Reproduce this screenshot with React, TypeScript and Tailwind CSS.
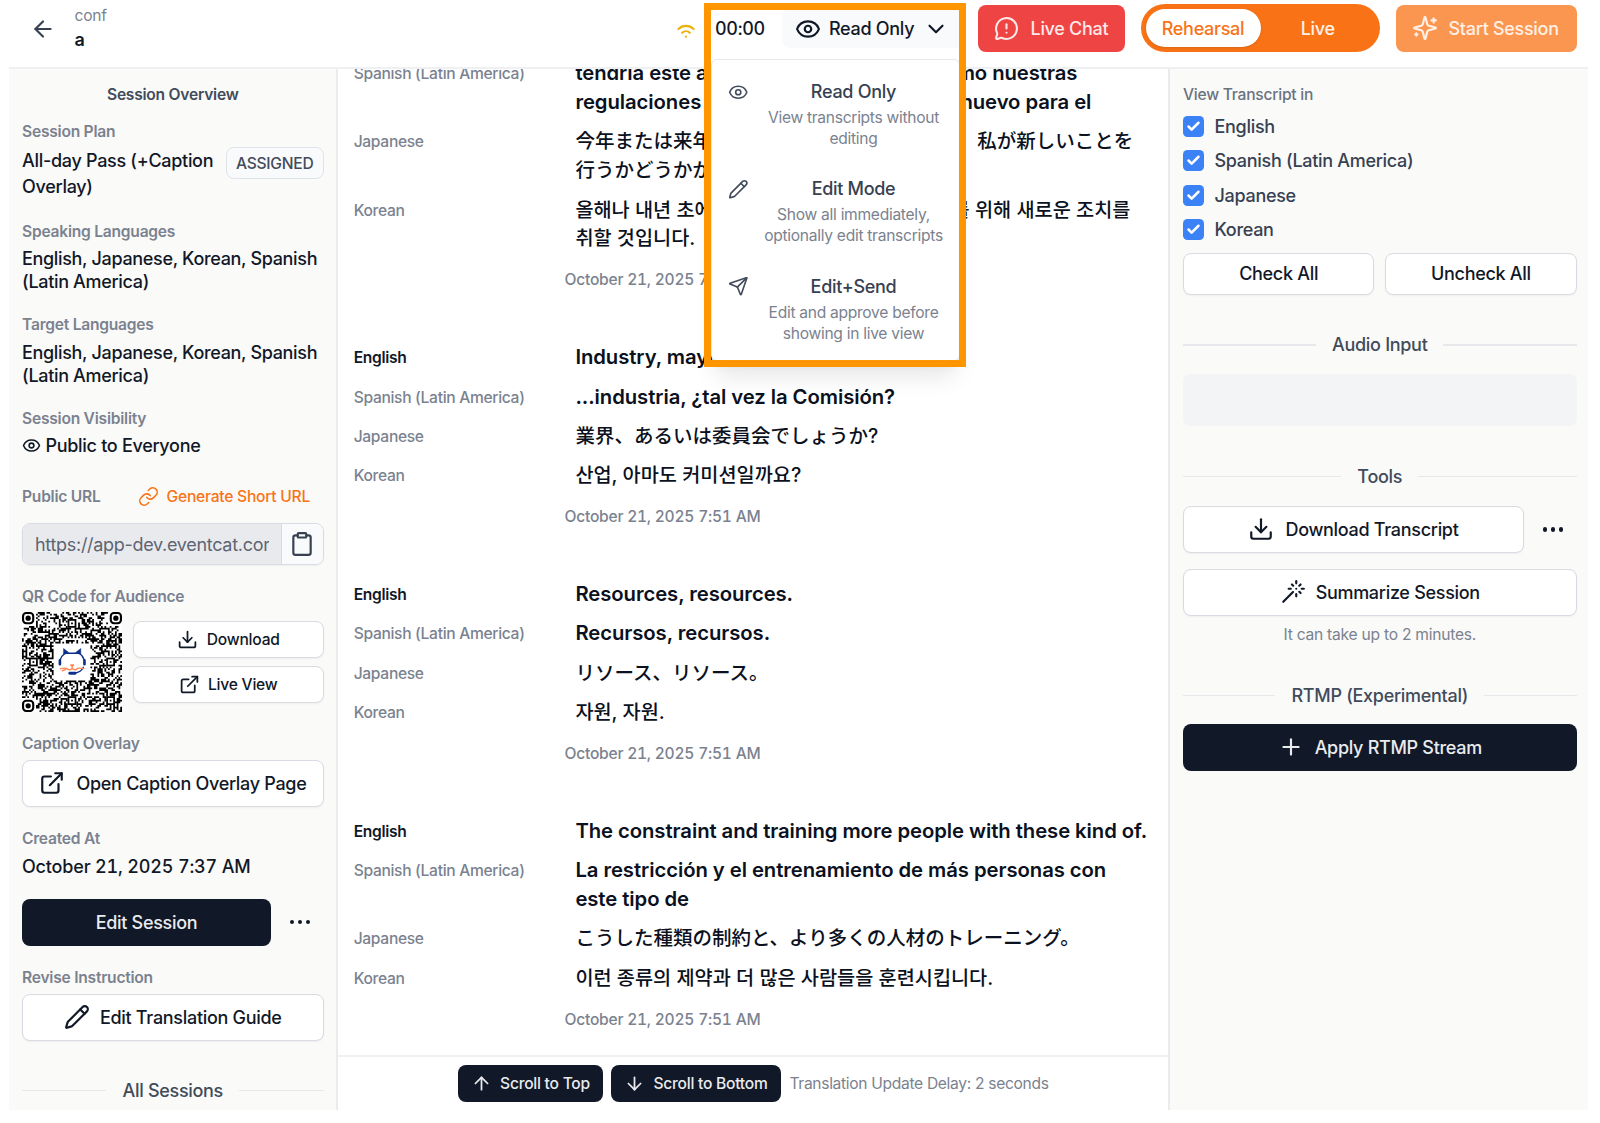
import type { ReactNode } from 'react';
import clsx from 'clsx';
import {
  ArrowDown,
  ArrowLeft,
  ArrowUp,
  Check,
  ChevronDown,
  Clipboard,
  Download,
  ExternalLink,
  Eye,
  Link,
  MessageCircleWarning,
  Pencil,
  Plus,
  Send,
  Wand,
  WifiHigh,
} from 'lucide-react';

/* ── Shared text styles ── */
const textBase = 'text-[18px] tracking-[-0.3px]';
const textSmall = 'text-[15.6px] tracking-[-0.24px]';

/* ── Transcript data ── */
type Line = { lang: string; rows: ReactNode[]; kind?: 'ja' | 'ko' };
type Entry = { id: number; lines: Line[]; time: string };

const Split = ({ className, left, right }: { className: string; left: string; right: string }) => (
  <span className={clsx('flex justify-between', className)}>
    <span>{left}</span>
    <span>{right}</span>
  </span>
);

const TIME = 'October 21, 2025 7:51 AM';

const entries: Entry[] = [
  {
    id: 1,
    time: TIME,
    lines: [
      {
        lang: 'Spanish (Latin America)',
        rows: [
          <Split key="a" className="w-[502px]" left="tendría este año" right="como nuestras" />,
          <Split key="b" className="w-[516px]" left="regulaciones" right="nuevo para el" />,
        ],
      },
      {
        lang: 'Japanese',
        kind: 'ja',
        rows: [
          <Split key="a" className="w-[558px]" left="今年または来年" right="私が新しいことを" />,
          '行うかどうかが',
        ],
      },
      {
        lang: 'Korean',
        kind: 'ko',
        rows: [
          <Split key="a" className="w-[555px]" left="올해나 내년 초에" right="를 위해 새로운 조치를" />,
          '취할 것입니다.',
        ],
      },
    ],
  },
  {
    id: 2,
    time: TIME,
    lines: [
      { lang: 'English', rows: ['Industry, maybe'] },
      { lang: 'Spanish (Latin America)', rows: ['...industria, ¿tal vez la Comisión?'] },
      { lang: 'Japanese', kind: 'ja', rows: ['業界、あるいは委員会でしょうか?'] },
      { lang: 'Korean', kind: 'ko', rows: ['산업, 아마도 커미션일까요?'] },
    ],
  },
  {
    id: 3,
    time: TIME,
    lines: [
      { lang: 'English', rows: ['Resources, resources.'] },
      { lang: 'Spanish (Latin America)', rows: ['Recursos, recursos.'] },
      { lang: 'Japanese', kind: 'ja', rows: ['リソース、リソース。'] },
      { lang: 'Korean', kind: 'ko', rows: ['자원, 자원.'] },
    ],
  },
  {
    id: 4,
    time: TIME,
    lines: [
      { lang: 'English', rows: ['The constraint and training more people with these kind of.'] },
      {
        lang: 'Spanish (Latin America)',
        rows: ['La restricción y el entrenamiento de más personas con', 'este tipo de'],
      },
      { lang: 'Japanese', kind: 'ja', rows: ['こうした種類の制約と、より多くの人材のトレーニング。'] },
      { lang: 'Korean', kind: 'ko', rows: ['이런 종류의 제약과 더 많은 사람들을 훈련시킵니다.'] },
    ],
  },
];

const modes = [
  { Icon: Eye, title: 'Read Only', lines: ['View transcripts without', 'editing'] },
  { Icon: Pencil, title: 'Edit Mode', lines: ['Show all immediately,', 'optionally edit transcripts'] },
  { Icon: Send, title: 'Edit+Send', lines: ['Edit and approve before', 'showing in live view'] },
];

const languages = ['English', 'Spanish (Latin America)', 'Japanese', 'Korean'];

/* ── QR code ── */
const QR_SIZE = 57;
const ALIGN = [
  [28, 6],
  [6, 28],
  [50, 28],
  [28, 50],
  [50, 50],
];
const FINDERS = [
  [0, 0],
  [50, 0],
  [0, 50],
];

const buildQrPath = () => {
  let seed = 20251021;
  let d = '';
  for (let y = 0; y < QR_SIZE; y++) {
    for (let x = 0; x < QR_SIZE; x++) {
      seed = (seed * 1103515245 + 12345) % 2147483648;
      const inFinder = FINDERS.some(([fx, fy]) => x >= fx - 1 && x <= fx + 7 && y >= fy - 1 && y <= fy + 7);
      const inAlign = ALIGN.some(([ax, ay]) => Math.abs(x - ax) < 3 && Math.abs(y - ay) < 3);
      const inLogo = x > 17 && x < 39 && y > 17 && y < 39;
      if (inFinder || inAlign || inLogo) continue;
      if ((seed >> 12) % 100 < 50) d += `M${x} ${y}h1v1h-1z`;
    }
  }
  return d;
};

const qrPath = buildQrPath();

const QrCode = () => (
  <svg viewBox="0 0 57 57" className="size-[100px] shrink-0 bg-white">
    <path d={qrPath} fill="#000" />
    {FINDERS.map(([x, y]) => (
      <g key={`${x}-${y}`}>
        <rect x={x + 0.6} y={y + 0.6} width="5.8" height="5.8" rx="1.8" fill="none" stroke="#000" strokeWidth="1.2" />
        <circle cx={x + 3.5} cy={y + 3.5} r="1.5" />
      </g>
    ))}
    {ALIGN.map(([x, y]) => (
      <g key={`${x}-${y}`}>
        <rect x={x - 1.5} y={y - 1.5} width="4" height="4" fill="none" stroke="#000" />
        <rect x={x} y={y} width="1" height="1" />
      </g>
    ))}
    {/* Cat logo with headset */}
    <g fill="none" strokeLinecap="round" strokeLinejoin="round">
      <path d="M21.8 27.2c.5-1.600 1.500-2.800 2.700-3.700h8.200c1.300.9 2.200 2.100 2.700 3.700" stroke="#0b2f8a" strokeWidth=".8" />
      <path d="M23.700 24v-3.200l2.900 2.300zM33.500 24v-3.200l-2.900 2.300z" fill="#0b2f8a" stroke="#0b2f8a" strokeWidth=".3" />
      <path d="M21.600 27.600v2.200M35.600 27.600v2.200" stroke="#0b2f8a" strokeWidth="1.500" />
      <path d="M35 31.500c-.8 1.700-2.300 2.800-4.400 3.200" stroke="#0b2f8a" strokeWidth=".7" />
      <path d="M27.300 34.900h2.900" stroke="#0b2f8a" strokeWidth="1.700" />
      <path
        d="M27.800 30.200h1.600l-.8.8zM28.600 31.200v1c-1.200 1.100-2.400.8-3-.1-1.100-.3-2.200-.1-3.600.2M28.600 32.200c1.200 1.100 2.400.8 3-.1 1.100-.3 2.200-.1 3.600.2M25 32.700l-2 .8"
        stroke="#ff8552"
        strokeWidth=".8"
      />
    </g>
  </svg>
);

const Sparkles = () => (
  <svg
    viewBox="0 0 24 24"
    className="size-[26px]"
    fill="none"
    stroke="currentColor"
    strokeWidth="2"
    strokeLinecap="round"
    strokeLinejoin="round"
  >
    <path d="M9.937 15.5A2 2 0 0 0 8.5 14.063l-6.135-1.582a.5.5 0 0 1 0-.962L8.5 9.936A2 2 0 0 0 9.937 8.5l1.582-6.135a.5.5 0 0 1 .963 0L14.063 8.5A2 2 0 0 0 15.5 9.937l6.135 1.581a.5.5 0 0 1 0 .964L15.5 14.063a2 2 0 0 0-1.437 1.437l-1.582 6.135a.5.5 0 0 1-.963 0z" />
    <path d="M20 3v4M22 5h-4M4 17v2M5 18H3" />
  </svg>
);

const Dots = () => (
  <span className="flex items-center gap-[3.800px]">
    <i className="size-[4.200px] rounded-full bg-[#111827]" />
    <i className="size-[4.200px] rounded-full bg-[#111827]" />
    <i className="size-[4.200px] rounded-full bg-[#111827]" />
  </span>
);

/* ── Building blocks ── */
const Label = ({ className, children }: { className?: string; children: ReactNode }) => (
  <div className={clsx('h-6 leading-6 font-semibold text-[#7b828f]', textSmall, className)}>{children}</div>
);

const Divider = ({ className, children }: { className?: string; children: ReactNode }) => (
  <div className={clsx('flex h-6 items-center gap-4 font-medium text-[#414b5a]', textBase, className)}>
    <span className="h-[1.500px] flex-1 bg-[#e6e8ec]" />
    {children}
    <span className="h-[1.500px] flex-1 bg-[#e6e8ec]" />
  </div>
);

const Button = ({
  className,
  dark,
  small,
  children,
}: {
  className?: string;
  dark?: boolean;
  small?: boolean;
  children: ReactNode;
}) => (
  <button
    className={clsx(
      'flex items-center justify-center rounded-[8px] font-medium whitespace-nowrap',
      small ? textSmall : textBase,
      dark ? 'bg-[#111827] text-[#e9ebee]' : 'border-[1.500px] border-[#d8dbe2] bg-white text-[#111827] shadow-xs',
      className,
    )}
  >
    {children}
  </button>
);

const Header = () => (
  <header className="flex h-[69px] shrink-0 border-b-2 border-[#eef0f2] pl-[21px]">
    <div className="flex h-[57px] items-center">
      <ArrowLeft size={26} className="text-[#374151]" />
    </div>
    <div className="ml-[18.500px] pt-[3.500px]">
      <div className={clsx('h-6 leading-6 text-[#7b828f]', textSmall)}>conf</div>
      <div className={clsx('h-6 leading-6 font-semibold text-[#111827]', textBase)}>a</div>
    </div>
    <div className="ml-auto flex h-14 items-center pr-[11.500px]">
      <WifiHigh size={26} className="text-[#eab308]" />
      <span className={clsx('ml-[16px] w-[66.500px] font-medium text-[#111827] tabular-nums', textBase)}>00:00</span>
      <div
        className={clsx(
          'flex h-[39px] w-[184px] items-center rounded-[8px] bg-[#f9fafb] pt-px pl-[13px] font-medium text-[#111827]',
          textBase,
        )}
      >
        <Eye size={26} />
        <span className="ml-[8.500px]">Read Only</span>
        <ChevronDown size={26} className="ml-[8.500px]" />
      </div>
      <button
        className={clsx(
          'ml-[12px] flex h-[47px] w-[147px] items-center rounded-[8px] bg-[#ef4444] pl-[16px] font-medium text-[#fde8e8]',
          textBase,
        )}
      >
        <MessageCircleWarning size={25} />
        <span className="ml-[12px]">Live Chat</span>
      </button>
      <div
        className={clsx(
          'ml-[16px] flex h-[48px] w-[239.500px] items-center rounded-full bg-[#f97316] p-[5px] font-medium',
          textBase,
        )}
      >
        <span className="flex h-full w-[115px] items-center justify-center rounded-full bg-white text-[#f97316] shadow">
          Rehearsal
        </span>
        <span className="flex-1 text-center text-[#fff1e6]">Live</span>
      </div>
      <button
        className={clsx(
          'ml-[15.500px] flex h-[47px] w-[181px] items-center rounded-[8px] bg-[#fb9650] pl-[16px] font-medium text-[#fff0e5]',
          textBase,
        )}
      >
        <Sparkles />
        <span className="ml-[11px]">Start Session</span>
      </button>
    </div>
  </header>
);

const Sidebar = () => (
  <aside className="flex w-[329px] shrink-0 flex-col overflow-hidden border-r-2 border-[#e9ebef] bg-[#fafaf9] pr-[12.500px] pl-[13px] text-[#111827]">
    <div className={clsx('mt-[14px] h-6 text-center leading-6 font-semibold text-[#414b5a]', textSmall)}>
      Session Overview
    </div>
    <Label className="mt-[13px]">Session Plan</Label>
    <div className="mt-[4px] flex justify-between">
      <div className={clsx('h-[52px] w-[200px] leading-[26px] font-medium', textBase)}>
        All-day Pass (+Caption Overlay)
      </div>
      <div
        className={clsx(
          '-mt-[0.700px] flex h-[32px] w-[97.500px] shrink-0 items-center justify-center rounded-[8px] border-[1.500px] border-[#dfe2e8] bg-[#f9fafb] font-medium text-[#414b5a]',
          textSmall,
        )}
      >
        ASSIGNED
      </div>
    </div>
    <Label className="mt-[19.500px]">Speaking Languages</Label>
    <div className="mt-[3.500px] text-[18px] leading-[23px] font-medium tracking-[-0.33px]">
      English, Japanese, Korean, Spanish
      <br />
      (Latin America)
    </div>
    <Label className="mt-[19.500px]">Target Languages</Label>
    <div className="mt-1 text-[18px] leading-[23px] font-medium tracking-[-0.33px]">
      English, Japanese, Korean, Spanish
      <br />
      (Latin America)
    </div>
    <Label className="mt-[20px]">Session Visibility</Label>
    <div className={clsx('mt-[3.500px] flex h-[23px] items-center gap-[4.500px] font-medium', textBase)}>
      <Eye size={19} />
      Public to Everyone
    </div>
    <div className="mt-[27.500px] flex items-center">
      <Label>Public URL</Label>
      <div className={clsx('ml-auto flex items-center gap-[8px] pr-[13.500px] font-medium text-[#f97316]', textSmall)}>
        <Link size={21} strokeWidth={1.8} />
        Generate Short URL
      </div>
    </div>
    <div className="mt-[14.500px] flex h-[42px] shrink-0 overflow-hidden rounded-[8px] border-[1.500px] border-[#d8dbe2] shadow-xs">
      <div className={clsx('flex flex-1 items-center bg-[#e9eaed] px-[12px] text-[#5d6572]', textBase)}>
        <span className="w-[234px] overflow-hidden whitespace-nowrap">https://app-dev.eventcat.com</span>
      </div>
      <div className="flex w-[42px] items-center justify-center border-l-[1.500px] border-[#d8dbe2] bg-[#f9fafb]">
        <Clipboard size={26} className="text-[#374151]" />
      </div>
    </div>
    <Label className="mt-[19.500px]">QR Code for Audience</Label>
    <div className="mt-[3.500px] flex items-center gap-[11px]">
      <QrCode />
      <div className="flex flex-1 flex-col gap-[8px]">
        <Button small className="h-[37px] gap-[9px]">
          <Download size={21} />
          Download
        </Button>
        <Button small className="h-[37px] gap-[8px]">
          <ExternalLink size={21} />
          Live View
        </Button>
      </div>
    </div>
    <Label className="mt-[20px]">Caption Overlay</Label>
    <Button className="mt-[3.500px] h-[47px] gap-[11.500px]">
      <ExternalLink size={26} />
      Open Caption Overlay Page
    </Button>
    <Label className="mt-[20px]">Created At</Label>
    <div className="mt-1 h-[23px] text-[18px] leading-[23px] font-medium tracking-[-0.18px] tabular-nums">
      October 21, 2025 7:37 AM
    </div>
    <div className="mt-[21px] flex items-center">
      <Button dark className="h-[47px] w-[249px]">
        Edit Session
      </Button>
      <span className="flex flex-1 justify-center pl-[5px]">
        <Dots />
      </span>
    </div>
    <Label className="mt-[20px]">Revise Instruction</Label>
    <Button className="mt-[4px] h-[47px] gap-[10px]">
      <Pencil size={26} />
      Edit Translation Guide
    </Button>
    <Divider className="mt-[38px]">All Sessions</Divider>
  </aside>
);

const Transcript = () => (
  <main className="flex min-w-0 flex-1 flex-col">
    <div className="min-h-0 flex-1 overflow-hidden">
      <div className="-mt-[15px]">
        {entries.map((entry) => (
          <div key={entry.id} className="pb-[46.400px]">
            {entry.lines.map((line) => (
              <div key={line.lang} className="flex py-[5.300px] pl-[15.700px]">
                <div
                  className={clsx(
                    'h-[28.800px] w-[221.700px] shrink-0 text-[15.600px] leading-[30.800px] tracking-[-0.32px]',
                    line.lang === 'English' ? 'font-semibold text-[#111827]' : 'font-medium text-[#7b828f]',
                  )}
                >
                  {line.lang}
                </div>
                <div
                  className={clsx(
                    'whitespace-nowrap text-[#0b1120]',
                    !line.kind && 'text-[20.300px] font-semibold tracking-[-0.07px]',
                    line.kind === 'ja' && "font-['Inter','Noto_Sans_CJK_JP',sans-serif] text-[19.500px] font-medium",
                    line.kind === 'ko' && "font-['Inter','Noto_Sans_CJK_KR',sans-serif] text-[19.700px] font-medium",
                  )}
                >
                  {line.rows.map((row, i) => (
                    <div key={i} className="h-[28.800px] leading-[28.800px]">
                      {row}
                    </div>
                  ))}
                </div>
              </div>
            ))}
            <div
              className={clsx(
                'mt-[8.900px] h-6 pl-[226.500px] leading-[25px] font-medium text-[#7b828f] tabular-nums',
                textSmall,
              )}
            >
              {entry.time}
            </div>
          </div>
        ))}
      </div>
    </div>
    <footer className="flex h-[55px] shrink-0 items-center border-t-2 border-[#eef0f2] pl-[120px]">
      <Button dark small className="h-[37px] w-[145px] gap-[8px]">
        <ArrowUp size={21} />
        Scroll to Top
      </Button>
      <Button dark small className="ml-[8px] h-[37px] w-[170px] gap-[8px]">
        <ArrowDown size={21} />
        Scroll to Bottom
      </Button>
      <span className="ml-[8.500px] text-[15.600px] tracking-[-0.32px] text-[#7b828f]">
        Translation Update Delay: 2 seconds
      </span>
    </footer>
  </main>
);

const ToolsPanel = () => (
  <aside className="flex w-[420px] shrink-0 flex-col border-l-2 border-[#e9ebef] bg-[#fafaf9] pr-[11.500px] pl-[13px]">
    <div className={clsx('mt-[14px] h-6 leading-6 font-medium text-[#6b7280]', textSmall)}>View Transcript in</div>
    <div className="mt-[2.700px]">
      {languages.map((lang) => (
        <div key={lang} className={clsx('flex h-[34.200px] items-center font-medium text-[#374151]', textBase)}>
          <span className="mr-[10.500px] flex size-[21px] items-center justify-center rounded-[4.500px] bg-[#3b82f6]">
            <Check size={15} strokeWidth={4} className="text-white" />
          </span>
          {lang}
        </div>
      ))}
    </div>
    <div className="mt-[6.500px] grid grid-cols-2 gap-[11px]">
      <Button className="h-[42px]">Check All</Button>
      <Button className="h-[42px]">Uncheck All</Button>
    </div>
    <Divider className="mt-[38px]">Audio Input</Divider>
    <div className="mt-[17px] h-[52px] rounded-[7px] bg-[#f3f4f6]" />
    <Divider className="mt-[38.500px]">Tools</Divider>
    <div className="mt-[17.500px] flex items-center">
      <Button className="h-[47px] w-[341px] gap-[11px]">
        <Download size={26} />
        Download Transcript
      </Button>
      <span className="flex flex-1 justify-center pl-[6px]">
        <Dots />
      </span>
    </div>
    <Button className="mt-[16px] h-[47px] gap-[10px]">
      <Wand size={26} />
      Summarize Session
    </Button>
    <div className={clsx('mt-[7px] h-6 text-center leading-6 text-[#7b828f]', textSmall)}>
      It can take up to 2 minutes.
    </div>
    <Divider className="mt-[36.500px]">RTMP (Experimental)</Divider>
    <Button dark className="mt-[16.500px] h-[47px] gap-[11px]">
      <Plus size={26} />
      Apply RTMP Stream
    </Button>
  </aside>
);

/* ── Mode menu, opened under the header button ── */
const ModeMenu = () => (
  <div className="absolute top-[59px] left-[711px] h-[302px] w-[249px] rounded-[6px] border border-[#e5e7eb] bg-white shadow-xl">
    {modes.map(({ Icon, title, lines }) => (
      <div key={title} className="flex h-[97.300px] pt-[20px] pl-[15.500px]">
        <Icon size={20.5} strokeWidth={1.9} className="mt-[1.500px] shrink-0 text-[#414b5a]" />
        <div className="ml-[10px] w-[191px] text-center">
          <div className={clsx('leading-6 font-medium text-[#374151]', textBase)}>{title}</div>
          <div className="mt-[3px] text-[15.600px] leading-[21px] tracking-[-0.29px] whitespace-nowrap text-[#7b828f]">
            {lines[0]}
            <br />
            {lines[1]}
          </div>
        </div>
      </div>
    ))}
  </div>
);

const App = () => (
  <div className="relative h-[1123px] w-[1600px] overflow-hidden bg-white font-['Inter','Noto_Sans_CJK_JP',sans-serif]">
    <div className="ml-[9px] flex h-[1110px] w-[1579px] flex-col">
      <Header />
      <div className="flex min-h-0 flex-1">
        <Sidebar />
        <Transcript />
        <ToolsPanel />
      </div>
    </div>
    <ModeMenu />
    <div className="absolute top-[3px] left-[704px] h-[364px] w-[262px] border-[7px] border-[#ff9500]" />
  </div>
);

export default App;
